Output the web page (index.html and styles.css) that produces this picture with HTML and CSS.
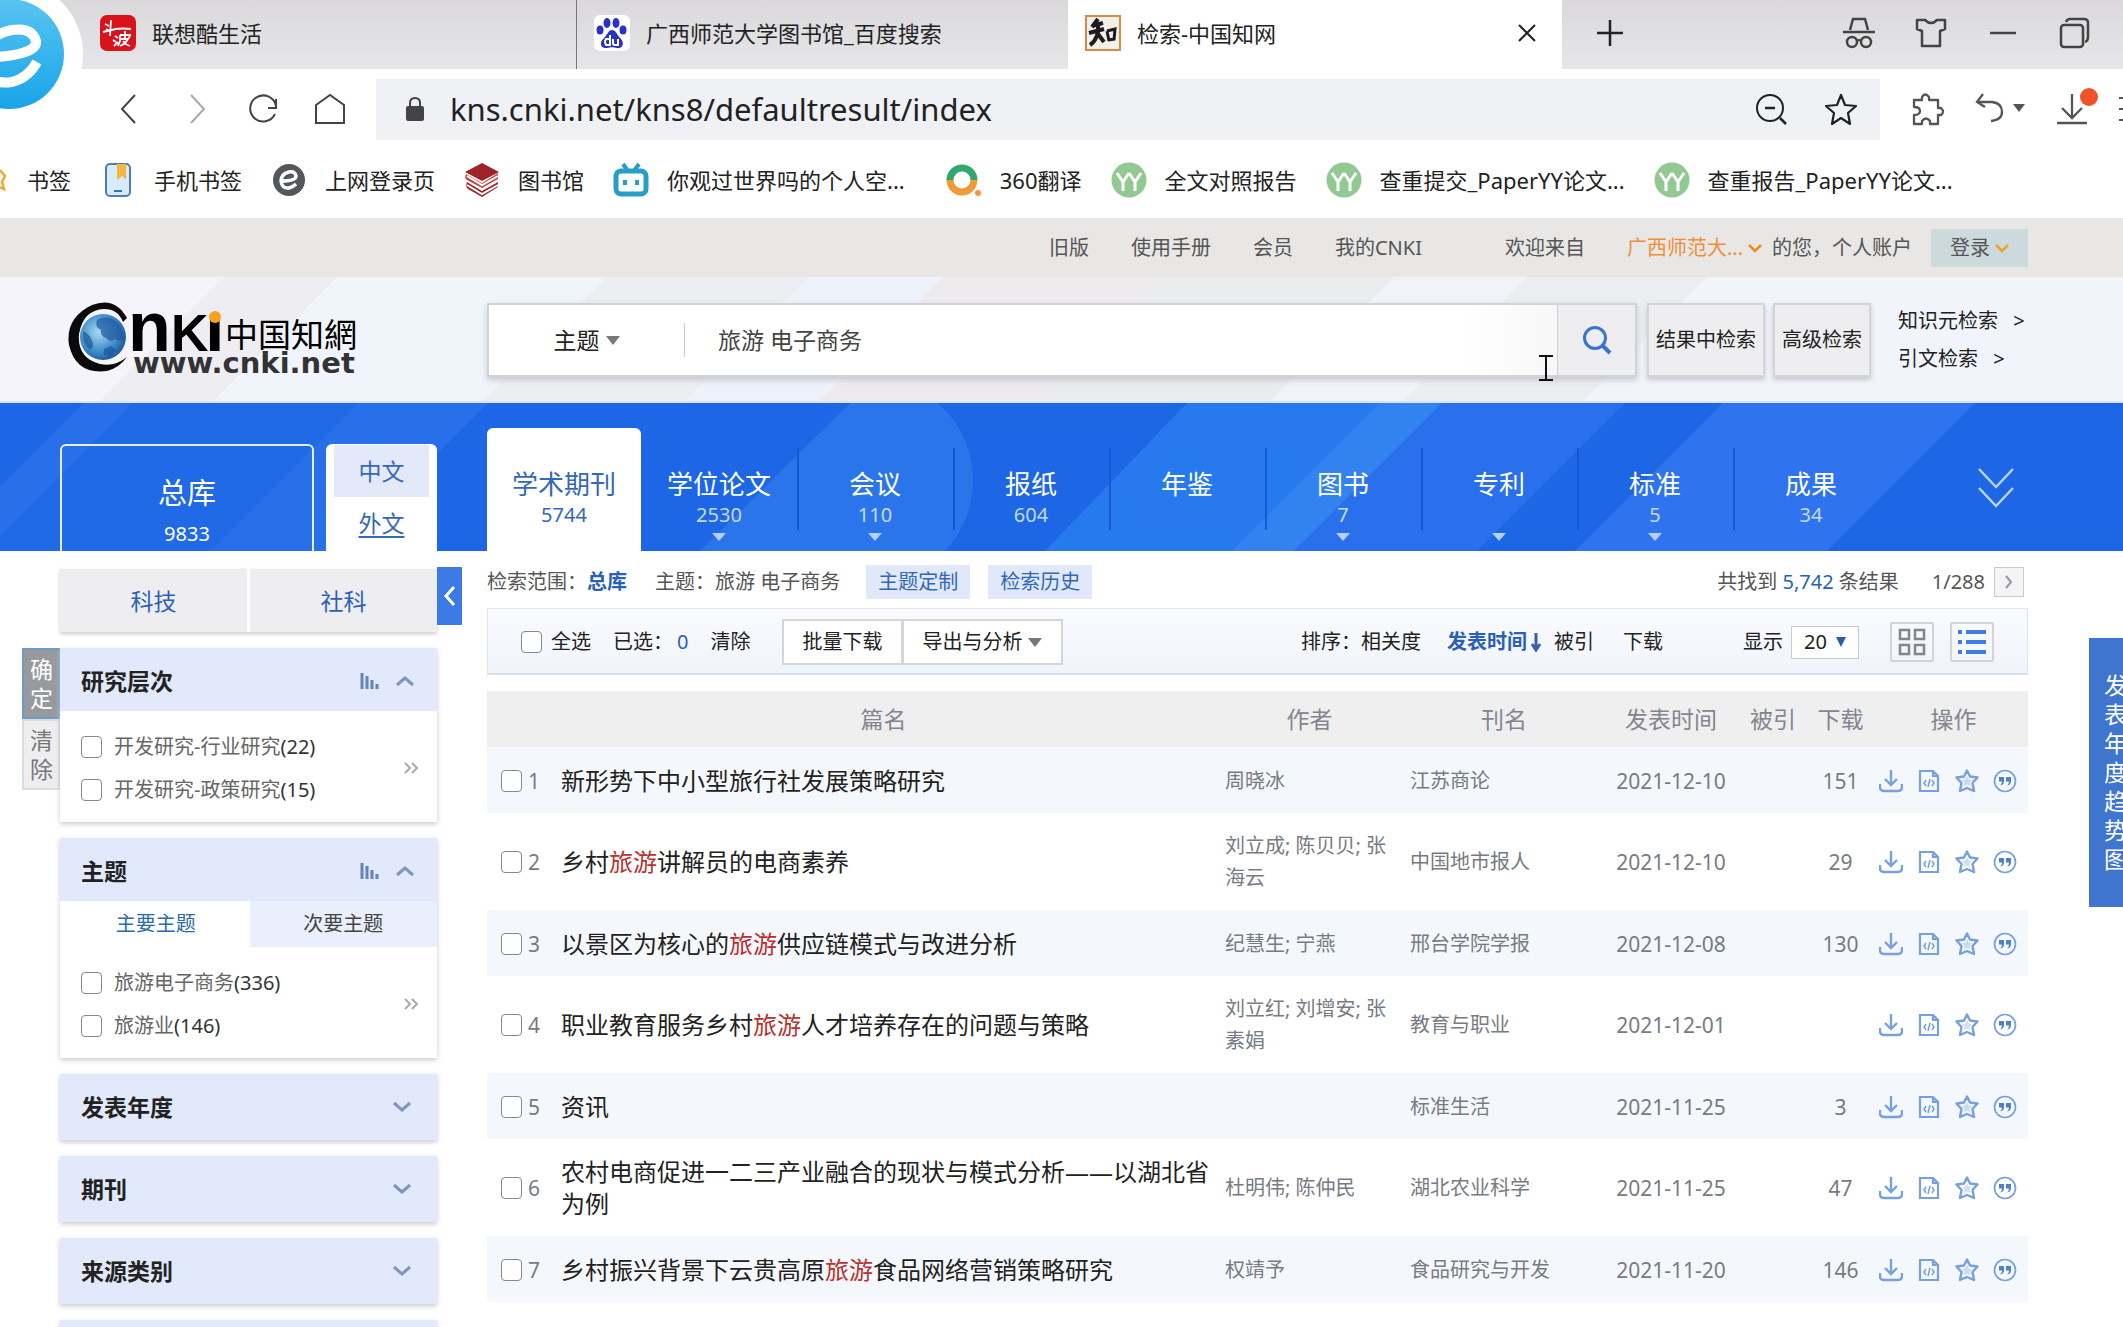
FILE: index.html
```html
<!DOCTYPE html>
<html lang="zh-CN">
<head>
<meta charset="utf-8">
<meta name="viewport" content="width=device-width, initial-scale=1">
<title>检索-中国知网</title>
<link rel="stylesheet" href="styles.css">
</head>
<body>
<svg class="sprite" aria-hidden="true">
  <symbol id="i-down" viewBox="0 0 24 24"><path d="M12 1v15M6 10l6 6 6-6M1 15v3q0 4 4 4h14q4 0 4-4v-3" fill="none" stroke="currentColor" stroke-width="2.400"/></symbol>
  <symbol id="i-doc" viewBox="0 0 24 24"><path d="M3 2h13l5 5v15H3zM16 2v5h5" fill="none" stroke="currentColor" stroke-width="2.200"/><path d="M9 11l-2 3 2 3M15 11l2 3-2 3M13 10l-2 8" fill="none" stroke="currentColor" stroke-width="1.500"/></symbol>
  <symbol id="i-star" viewBox="0 0 24 24"><path d="M12 1.500l3 6 7.500 1-5 5.500 1.500 8-7-3-7 3 1.500-8-5-5.500 7.500-1z" fill="none" stroke="currentColor" stroke-width="2.400" stroke-linejoin="round"/><path d="M12 7l1.700 3.500 3.300.5-2.500 2.500.7 3.500-3.200-1.500-3.200 1.500.7-3.500-2.500-2.500 3.300-.5z" fill="currentColor" opacity=".35"/></symbol>
  <symbol id="i-quote" viewBox="0 0 24 24"><circle cx="12" cy="12" r="10.500" fill="none" stroke="currentColor" stroke-width="1.700"/><path d="M6 8h5v4q0 4-4 4.500 2-1.500 2-4H6zM13 8h5v4q0 4-4 4.500 2-1.500 2-4h-3z" fill="#4f80cc"/></symbol>
  <symbol id="i-yy" viewBox="0 0 36 36"><circle cx="18" cy="18" r="17.500" fill="#92c891"/><path d="M6 11l6 9v9M12 20l6-9M18 11l6 9v9M24 20l6-9" fill="none" stroke="#fff" stroke-width="3"/></symbol>
  <symbol id="i-up" viewBox="0 0 20 12"><path d="M2 10l8-7 8 7" fill="none" stroke="#8095bb" stroke-width="3"/></symbol>
  <symbol id="i-dn" viewBox="0 0 20 12"><path d="M2 2l8 7 8-7" fill="none" stroke="#8095bb" stroke-width="3"/></symbol>
  <symbol id="i-bars" viewBox="0 0 20 16"><path d="M2 0v16M7 3v13M12 7v9M17 11v5" fill="none" stroke="#6383bb" stroke-width="3"/></symbol>
  <symbol id="i-more" viewBox="0 0 16 12"><path d="M2 1l5 5-5 5M9 1l5 5-5 5" fill="none" stroke="#a9a9ae" stroke-width="2"/></symbol>
</svg>

<header class="browser">
  <div class="tabstrip">
    <div class="tab">
      <svg class="i36" viewBox="0 0 36 36"><rect width="36" height="36" rx="7" fill="#d8131c"/><path d="M5 9l4 2M6 14l4 2M11 5l-1 16M3 17l13-3M15 14q8-1 16 0M15 21l3 2M13 25l3 2M14 31l4-4M20 20v6l-2 5M20 20h10l-1 3M25 16v8M21 24h7q-3 5-8 7M23 26q3 4 7 5" stroke="#fff" stroke-width="1.800" fill="none"/></svg>
      <span>联想酷生活</span>
    </div>
    <div class="tab tab-second">
      <svg class="i36" viewBox="0 0 36 36"><rect width="36" height="36" rx="6" fill="#fff"/><g fill="#2932c4"><ellipse cx="13" cy="8" rx="3.500" ry="5"/><ellipse cx="22" cy="8" rx="3.500" ry="5"/><ellipse cx="6" cy="15" rx="3.500" ry="4.500"/><ellipse cx="29" cy="15" rx="3.500" ry="4.500"/><path d="M18 15c4 0 5 5 9 9 4 5 1 10-4 9-4-1-6-1-10 0-6 1-8-5-4-9 4-3 5-9 9-9z"/></g><path d="M16 20v10h-4q-2-3 0-6h4M19 24v4q0 2 2 2h3v-6" fill="none" stroke="#fff" stroke-width="2"/></svg>
      <span>广西师范大学图书馆_百度搜索</span>
    </div>
    <div class="tab tab-active">
      <svg class="i36" viewBox="0 0 36 36"><rect x="1" y="1" width="34" height="34" fill="#f3f0ea" stroke="#d98a4b" stroke-width="2"/><path d="M13 4l-6 8M7 11l11-3M4 18l15-4M13 8v9q-2 9-8 13M13 19l6 8" fill="none" stroke="#1c1c22" stroke-width="4"/><path d="M22 16l2 10M22 16l8-2-1 11M23 25l7-1" fill="none" stroke="#1c1c22" stroke-width="3"/></svg>
      <span>检索-中国知网</span>
      <button class="tab-close" aria-label="关闭"><svg width="20" height="20" viewBox="0 0 20 20"><path d="M2 2l16 16M18 2L2 18" stroke="#222" stroke-width="2"/></svg></button>
    </div>
    <button aria-label="新标签页" class="newtab"><svg width="28" height="28" viewBox="0 0 28 28"><path d="M14 1v26M1 14h26" stroke="#222" stroke-width="2.500"/></svg></button>
    <div class="window-tools">
      <button aria-label="无痕"><svg width="34" height="32" viewBox="0 0 34 32"><path d="M8 13l3-11h12l3 11M1 15h32" fill="none" stroke="#444" stroke-width="2.500"/><circle cx="10" cy="25" r="5" fill="none" stroke="#444" stroke-width="2.500"/><circle cx="24" cy="25" r="5" fill="none" stroke="#444" stroke-width="2.500"/><path d="M15 24q2-2 4 0" fill="none" stroke="#444" stroke-width="2"/></svg></button>
      <button aria-label="皮肤"><svg width="34" height="32" viewBox="0 0 34 32"><path d="M3 3h8q6 6 12 0h8v9l-5 2v15H8V14l-5-2z" fill="none" stroke="#444" stroke-width="2.500" stroke-linejoin="round"/></svg></button>
      <button aria-label="最小化"><svg width="34" height="32" viewBox="0 0 34 32"><path d="M4 16h26" stroke="#444" stroke-width="2.500"/></svg></button>
      <button aria-label="还原"><svg width="34" height="32" viewBox="0 0 34 32"><rect x="3" y="8" width="22" height="22" rx="3" fill="none" stroke="#444" stroke-width="2.500"/><path d="M8 5q1-3 4-3h14q4 0 4 4v14q0 4-3 5" fill="none" stroke="#444" stroke-width="2.500"/></svg></button>
    </div>
  </div>

  <div class="addressrow">
    <div class="navbuttons">
      <button aria-label="后退"><svg width="32" height="32" viewBox="0 0 32 32"><path d="M22 2L9 16l13 14" fill="none" stroke="#444" stroke-width="2"/></svg></button>
      <button aria-label="前进"><svg width="32" height="32" viewBox="0 0 32 32"><path d="M11 2l13 14-13 14" fill="none" stroke="#aaa" stroke-width="2"/></svg></button>
      <button aria-label="刷新"><svg width="32" height="32" viewBox="0 0 32 32"><path d="M28 21A13 13 0 1 1 29 13M29 6v9h-8" fill="none" stroke="#444" stroke-width="2"/></svg></button>
      <button aria-label="主页"><svg width="32" height="32" viewBox="0 0 32 32"><path d="M2 12L16 2l14 10v18H2z" fill="none" stroke="#444" stroke-width="2"/></svg></button>
    </div>
    <div class="addressbar">
      <svg width="18" height="24" viewBox="0 0 18 24"><path d="M4 10V6q0-5 5-5t5 5v4" fill="none" stroke="#444" stroke-width="2"/><rect y="9" width="18" height="15" rx="2" fill="#444"/></svg>
      <input class="url" type="text" aria-label="地址" value="kns.cnki.net/kns8/defaultresult/index">
      <svg width="32" height="32" viewBox="0 0 32 32"><circle cx="15" cy="15" r="13" fill="none" stroke="#222" stroke-width="2"/><path d="M10 15h10M25 25l6 6" stroke="#222" stroke-width="2.500"/></svg>
      <svg width="32" height="32" viewBox="0 0 32 32"><path d="M16 2l4 10 11 1-8 7 2 11-9-6-9 6 2-11-8-7 11-1z" fill="none" stroke="#222" stroke-width="2.200" stroke-linejoin="round"/></svg>
    </div>
    <div class="exttools">
      <svg width="34" height="34" viewBox="0 0 34 34"><path d="M3 8h8V5q3-5 7 0v3h9v8h3q4 4 0 7h-3v9h-8v-3q-4-5-8 0v3H3v-9q6 0 6-4t-6-4z" fill="none" stroke="#555" stroke-width="2.300" stroke-linejoin="round"/></svg>
      <svg width="52" height="34" viewBox="0 0 52 34"><path d="M9 2L3 10l8 5M3 10h15q10 1 10 10 0 8-11 9" fill="none" stroke="#555" stroke-width="2.300"/><path d="M39 12h12l-6 8z" fill="#555"/></svg>
      <svg width="46" height="44" viewBox="0 0 46 44"><path d="M17 7v24M7 21l10 10 10-10M2 36h30" fill="none" stroke="#555" stroke-width="2.300"/><circle cx="34" cy="10" r="9" fill="#ee5427"/></svg>
    </div>
    <svg class="menu-edge" width="4" height="26" viewBox="0 0 4 26"><path d="M0 2h4M0 13h4M0 24h4" stroke="#555" stroke-width="2"/></svg>
  </div>

  <nav class="bookmarks">
    <a href="#" class="bm bm-first"><svg width="6" height="24" viewBox="0 0 6 24"><path d="M0 2l5 6-3 6 2 7-4-2" fill="none" stroke="#f5a72a" stroke-width="2.500"/></svg><span>书签</span></a>
    <a href="#" class="bm"><svg class="i36" viewBox="0 0 36 36"><rect x="6" y="2" width="24" height="32" rx="4" fill="#d6ebfc" stroke="#4a7fb5" stroke-width="2"/><path d="M17 2h9v16l-4-4-5 4z" fill="#f6b53c"/><path d="M14 29h8" stroke="#2f75b8" stroke-width="2"/></svg><span>手机书签</span></a>
    <a href="#" class="bm"><svg class="i36" viewBox="0 0 36 36"><circle cx="18" cy="18" r="16" fill="#53565c"/><path d="M11 19q14 0 14-5-1-5-7-4-8 2-8 9 1 8 8 7 4-1 7-4" fill="none" stroke="#fff" stroke-width="3.500"/></svg><span>上网登录页</span></a>
    <a href="#" class="bm"><svg class="i36" viewBox="0 0 36 36"><path d="M1 10l17-9 17 9-17 9z" fill="#9d2329"/><path d="M2 12q-2 4 1 6l15 8 16-9v-6L18 21z" fill="#bd4a4d"/><path d="M3 20q-2 5 1 7l14 8 16-10v-5l-16 9z" fill="#9d2329"/><path d="M3 14l15 9 16-9M3 23l15 9 16-9" stroke="#fff" stroke-width="2" fill="none"/></svg><span>图书馆</span></a>
    <a href="#" class="bm"><svg class="i36" viewBox="0 0 36 36"><path d="M10 2l5 7M26 2l-5 7" stroke="#279fc4" stroke-width="4"/><rect x="3" y="9" width="30" height="23" rx="5" fill="#fff" stroke="#279fc4" stroke-width="5"/><path d="M12 18v5M24 18v5" stroke="#279fc4" stroke-width="4"/></svg><span>你观过世界吗的个人空...</span></a>
    <a href="#" class="bm bm-wide"><svg class="i36" viewBox="0 0 36 36"><path d="M4 18a12 12 0 0 1 24 0" fill="none" stroke="#2fa86b" stroke-width="7"/><path d="M4 18a12 12 0 0 0 24 0" fill="none" stroke="#f09a3c" stroke-width="7"/><circle cx="32" cy="31" r="3" fill="#f09a3c"/></svg><span>360翻译</span></a>
    <a href="#" class="bm"><svg class="i36"><use href="#i-yy"/></svg><span>全文对照报告</span></a>
    <a href="#" class="bm"><svg class="i36"><use href="#i-yy"/></svg><span>查重提交_PaperYY论文...</span></a>
    <a href="#" class="bm"><svg class="i36"><use href="#i-yy"/></svg><span>查重报告_PaperYY论文...</span></a>
  </nav>

  <svg class="browser-logo" width="86" height="128" viewBox="0 0 86 128" aria-hidden="true">
    <defs><linearGradient id="lg" x1="0" y1="0" x2="0" y2="1"><stop offset="0" stop-color="#58c4f2"/><stop offset="1" stop-color="#18a4e8"/></linearGradient></defs>
    <circle cx="9" cy="54" r="74" fill="#fff"/><circle cx="9" cy="54" r="55" fill="url(#lg)"/>
    <path d="M-20 58Q38 56 36 41 32 27 12 30-14 34-18 62-14 86 12 82 28 78 37 62" fill="none" stroke="#fff" stroke-width="10"/>
  </svg>
</header>

<div class="topbar">
  <a href="#">旧版</a><a href="#">使用手册</a><a href="#">会员</a><a href="#">我的CNKI</a>
  <span class="welcome">欢迎来自</span>
  <a href="#" class="org">广西师范大...<svg width="14" height="10" viewBox="0 0 14 10"><path d="M1 2l6 6 6-6" fill="none" stroke="#f08c1e" stroke-width="2.500"/></svg></a>
  <span class="account">的您，个人账户</span>
  <button class="login">登录<svg width="14" height="10" viewBox="0 0 14 10"><path d="M1 2l6 6 6-6" fill="none" stroke="#f0a030" stroke-width="2.500"/></svg></button>
</div>

<section class="masthead">
  <a href="#" class="logo" aria-label="中国知网">
    <svg width="300" height="84" viewBox="0 0 300 84">
      <defs><radialGradient id="gl" cx=".4" cy=".4" r=".7"><stop offset="0" stop-color="#a9d8ef"/><stop offset=".6" stop-color="#3d8cc9"/><stop offset="1" stop-color="#16488f"/></radialGradient></defs>
      <path d="M60 20Q48-2 25 7-2 20 2 47 9 77 40 73 52 70 60 59 48 69 33 66 10 60 12 36 16 12 37 11 51 11 56 24z" fill="#0a0a0a"/>
      <circle cx="36" cy="39" r="23" fill="url(#gl)"/>
      <path d="M30 22q7-5 16-1 12 8 11 20-4 3-9 0-5 4-9-1-6-2-5-8-7-3-4-10zM16 33q7 3 9 10 3 5-2 9-8-7-7-19zM37 51l7-3 5 4-5 6-7-1z" fill="#1c579f" opacity=".7"/>
      <text class="lg-n" x="61" y="53">n</text><text class="lg-k" x="104" y="53">K</text><text class="lg-n" x="138" y="53">ı</text>
      <circle cx="148" cy="19" r="6" fill="#f5a31c"/>
      <text class="lg-zh" x="158" y="49">中国知網</text>
      <text class="lg-url" x="66" y="75">www.cnki.net</text>
    </svg>
  </a>
  <form class="search">
    <label class="field"><select aria-label="检索字段"><option>主题</option></select><svg width="14" height="9" viewBox="0 0 14 9"><path d="M0 0h14l-7 9z" fill="#777"/></svg></label>
    <input class="query" type="text" aria-label="检索词" value="旅游 电子商务">
    <button class="go" type="button" aria-label="检索"><svg width="30" height="30" viewBox="0 0 30 30"><circle cx="13" cy="13" r="10.500" fill="none" stroke="#3b74cf" stroke-width="3"/><path d="M20 20l8 8" stroke="#3b74cf" stroke-width="4"/></svg></button>
  </form>
  <button class="sq sq-wide">结果中检索</button>
  <button class="sq">高级检索</button>
  <div class="links"><a href="#">知识元检索 <i>&gt;</i></a><a href="#">引文检索 <i>&gt;</i></a></div>
  <svg class="ibeam" width="14" height="26" viewBox="0 0 14 26" aria-hidden="true"><path d="M0 1h14M0 25h14M7 1v24" stroke="#111" stroke-width="2"/></svg>
</section>

<nav class="catalog">
  <svg class="catalog-bg" viewBox="0 0 2123 148" preserveAspectRatio="none" aria-hidden="true">
    <rect width="2123" height="148" fill="#1d66e6"/>
    <path d="M84 0h49L-15 148h-49z" fill="#296fea"/><path d="M133 0h225L210 148H-15z" fill="#2069e7"/>
    <path d="M358 0h130L340 148H210z" fill="#286fea"/>
    <path d="M850 0L700 148H945A103 103 0 0 0 938 0z" fill="#2a75ea"/>
    <path d="M1187 0h255l-148 148h-249z" fill="#267aed"/><path d="M1380 0h62l-148 148h-62z" fill="#3282ef"/>
    <path d="M1442 0h183l-148 148h-183z" fill="#2a6feb"/>
    <path d="M1723 0h252l-148 148h-252z" fill="#2f73ee"/>
  </svg>
  <a href="#" class="all"><b>总库</b><span>9833</span></a>
  <div class="lang"><a href="#" class="on">中文</a><a href="#" class="under">外文</a></div>
  <div class="types">
    <a href="#" class="type active"><b>学术期刊</b><span>5744</span></a>
    <a href="#" class="type more"><b>学位论文</b><span>2530</span></a>
    <a href="#" class="type more"><b>会议</b><span>110</span></a>
    <a href="#" class="type"><b>报纸</b><span>604</span></a>
    <a href="#" class="type"><b>年鉴</b><span></span></a>
    <a href="#" class="type more"><b>图书</b><span>7</span></a>
    <a href="#" class="type more"><b>专利</b><span></span></a>
    <a href="#" class="type more"><b>标准</b><span>5</span></a>
    <a href="#" class="type"><b>成果</b><span>34</span></a>
  </div>
  <button class="expand" aria-label="展开"><svg width="36" height="40" viewBox="0 0 36 40"><path d="M1 1l17 18L35 1M1 20l17 18 17-18" fill="none" stroke="#b9d4fa" stroke-width="2.500"/></svg></button>
</nav>

<div class="page">
  <div class="apply"><button class="ok">确定</button><button class="clear">清除</button></div>
  <aside class="sidebar">
    <div class="disciplines"><button>科技</button><button>社科</button></div>
    <section class="card">
      <h2>研究层次<span class="head-icons"><svg width="20" height="16"><use href="#i-bars"/></svg><svg width="20" height="12"><use href="#i-up"/></svg></span></h2>
      <div class="options">
        <div><label><input type="checkbox">开发研究-行业研究<em>(22)</em></label><label><input type="checkbox">开发研究-政策研究<em>(15)</em></label></div>
        <svg width="16" height="12"><use href="#i-more"/></svg>
      </div>
    </section>
    <section class="card">
      <h2>主题<span class="head-icons"><svg width="20" height="16"><use href="#i-bars"/></svg><svg width="20" height="12"><use href="#i-up"/></svg></span></h2>
      <div class="subtabs"><button class="cur">主要主题</button><button>次要主题</button></div>
      <div class="options">
        <div><label><input type="checkbox">旅游电子商务<em>(336)</em></label><label><input type="checkbox">旅游业<em>(146)</em></label></div>
        <svg width="16" height="12"><use href="#i-more"/></svg>
      </div>
    </section>
    <section class="card closed"><h2>发表年度<svg width="20" height="12"><use href="#i-dn"/></svg></h2></section>
    <section class="card closed"><h2>期刊<svg width="20" height="12"><use href="#i-dn"/></svg></h2></section>
    <section class="card closed"><h2>来源类别<svg width="20" height="12"><use href="#i-dn"/></svg></h2></section>
    <section class="card closed"><h2></h2></section>
  </aside>
  <button class="collapse" aria-label="收起"><svg width="12" height="20" viewBox="0 0 12 20"><path d="M10 1L2 10l8 9" fill="none" stroke="#fff" stroke-width="3"/></svg></button>

  <main class="results">
    <div class="scope">
      <span>检索范围：</span><strong>总库</strong><span class="cond">主题：旅游 电子商务</span>
      <button class="chip">主题定制</button><button class="chip">检索历史</button>
      <span class="found">共找到 <a href="#">5,742</a> 条结果</span><span class="pages">1/288</span>
      <button class="next" aria-label="下一页"><svg width="8" height="14" viewBox="0 0 8 14"><path d="M1 1l5 6-5 6" fill="none" stroke="#999" stroke-width="2"/></svg></button>
    </div>
    <div class="toolbar">
      <label class="all-check"><input type="checkbox">全选</label>
      <span class="picked">已选：<a href="#">0</a></span><a href="#" class="wipe">清除</a>
      <div class="batch"><button>批量下载</button><button>导出与分析<svg width="14" height="9" viewBox="0 0 14 9"><path d="M0 0h14l-7 9z" fill="#777"/></svg></button></div>
      <div class="sort"><span>排序：</span><a href="#">相关度</a><a href="#" class="by">发表时间<svg width="12" height="20" viewBox="0 0 12 20"><path d="M6 1v16M2 12l4 6 4-6" fill="none" stroke="#3a5fae" stroke-width="3"/></svg></a><a href="#" class="cited">被引</a><a href="#" class="dl">下载</a></div>
      <label class="size">显示<span><select><option>20</option></select><svg width="10" height="10" viewBox="0 0 10 10"><path d="M0 0h10l-5 10z" fill="#2a5cab"/></svg></span></label>
      <button class="view" aria-label="缩略"><svg width="28" height="28" viewBox="0 0 28 28"><path d="M2 2h9v9H2zM17 2h9v9h-9zM2 17h9v9H2zM17 17h9v9h-9z" fill="none" stroke="#85858c" stroke-width="2.500"/></svg></button>
      <button class="view" aria-label="列表"><svg width="28" height="28" viewBox="0 0 28 28"><path d="M8 4h20M8 14h20M8 24h20M0 4h4M0 14h4M0 24h4" stroke="#3f7ee0" stroke-width="4"/></svg></button>
    </div>
    <table>
      <colgroup><col class="c-sel"><col><col class="c-author"><col class="c-journal"><col class="c-date"><col class="c-cited"><col class="c-down"><col class="c-ops"></colgroup>
      <thead><tr><th></th><th>篇名</th><th>作者</th><th>刊名</th><th>发表时间</th><th>被引</th><th>下载</th><th>操作</th></tr></thead>
      <tbody>
        <tr><td class="sel"><label><input type="checkbox">1</label></td><td class="title"><a href="#">新形势下中小型旅行社发展策略研究</a></td><td class="author">周晓冰</td><td>江苏商论</td><td class="date">2021-12-10</td><td></td><td class="num">151</td><td class="ops"><div><svg><use href="#i-down"/></svg><svg><use href="#i-doc"/></svg><svg><use href="#i-star"/></svg><svg><use href="#i-quote"/></svg></div></td></tr>
        <tr><td class="sel"><label><input type="checkbox">2</label></td><td class="title"><a href="#">乡村<mark>旅游</mark>讲解员的电商素养</a></td><td class="author">刘立成; 陈贝贝; 张海云</td><td>中国地市报人</td><td class="date">2021-12-10</td><td></td><td class="num">29</td><td class="ops"><div><svg><use href="#i-down"/></svg><svg><use href="#i-doc"/></svg><svg><use href="#i-star"/></svg><svg><use href="#i-quote"/></svg></div></td></tr>
        <tr><td class="sel"><label><input type="checkbox">3</label></td><td class="title"><a href="#">以景区为核心的<mark>旅游</mark>供应链模式与改进分析</a></td><td class="author">纪慧生; 宁燕</td><td>邢台学院学报</td><td class="date">2021-12-08</td><td></td><td class="num">130</td><td class="ops"><div><svg><use href="#i-down"/></svg><svg><use href="#i-doc"/></svg><svg><use href="#i-star"/></svg><svg><use href="#i-quote"/></svg></div></td></tr>
        <tr><td class="sel"><label><input type="checkbox">4</label></td><td class="title"><a href="#">职业教育服务乡村<mark>旅游</mark>人才培养存在的问题与策略</a></td><td class="author">刘立红; 刘增安; 张素娟</td><td>教育与职业</td><td class="date">2021-12-01</td><td></td><td class="num"></td><td class="ops"><div><svg><use href="#i-down"/></svg><svg><use href="#i-doc"/></svg><svg><use href="#i-star"/></svg><svg><use href="#i-quote"/></svg></div></td></tr>
        <tr><td class="sel"><label><input type="checkbox">5</label></td><td class="title"><a href="#">资讯</a></td><td class="author"></td><td>标准生活</td><td class="date">2021-11-25</td><td></td><td class="num">3</td><td class="ops"><div><svg><use href="#i-down"/></svg><svg><use href="#i-doc"/></svg><svg><use href="#i-star"/></svg><svg><use href="#i-quote"/></svg></div></td></tr>
        <tr><td class="sel"><label><input type="checkbox">6</label></td><td class="title"><a href="#">农村电商促进一二三产业融合的现状与模式分析——以湖北省为例</a></td><td class="author">杜明伟; 陈仲民</td><td>湖北农业科学</td><td class="date">2021-11-25</td><td></td><td class="num">47</td><td class="ops"><div><svg><use href="#i-down"/></svg><svg><use href="#i-doc"/></svg><svg><use href="#i-star"/></svg><svg><use href="#i-quote"/></svg></div></td></tr>
        <tr><td class="sel"><label><input type="checkbox">7</label></td><td class="title"><a href="#">乡村振兴背景下云贵高原<mark>旅游</mark>食品网络营销策略研究</a></td><td class="author">权靖予</td><td>食品研究与开发</td><td class="date">2021-11-20</td><td></td><td class="num">146</td><td class="ops"><div><svg><use href="#i-down"/></svg><svg><use href="#i-doc"/></svg><svg><use href="#i-star"/></svg><svg><use href="#i-quote"/></svg></div></td></tr>
      </tbody>
    </table>
  </main>
</div>
<a href="#" class="trend">发表年度趋势图</a>
</body>
</html>
```
FILE: styles.css
```css
* { box-sizing: border-box; }
html, body { margin: 0; height: 100%; }
body {
  position: relative;
  overflow: hidden;
  background: #fff;
  color: #222;
  font: 20px/32px "Noto Sans", "Noto Sans CJK SC", sans-serif;
}
a { color: inherit; text-decoration: none; }
button, input, select { font: inherit; color: inherit; margin: 0; }
button { padding: 0; border: 0; background: none; white-space: nowrap; }
svg { flex: none; display: block; }
.sprite { position: absolute; width: 0; height: 0; }
input[type="checkbox"] {
  appearance: none;
  flex: none;
  width: 21px;
  height: 22px;
  border: 1px solid #888;
  border-radius: 4px;
  background: #fff;
}
.i36 { width: 36px; height: 36px; }

/* browser frame */
.browser { position: relative; font-size: 22px; }
.browser-logo { position: absolute; left: 0; top: 0; }
.tabstrip {
  display: flex;
  align-items: center;
  height: 69px;
  padding-left: 83px;
  background: linear-gradient(#dad8db, #e6e6e8);
}
.tab {
  display: flex;
  align-items: center;
  gap: 16px;
  width: 493px;
  height: 69px;
  padding: 0 25px 4px 17px;
}
.tab-second { border-left: 1px solid #777; width: 492px; }
.tab-active { background: #fff; width: 494px; }
.tab-close { margin-left: auto; }
.newtab { margin: 0 0 4px 34px; }
.window-tools { display: flex; gap: 38px; margin: 0 31px 4px auto; }
.addressrow { display: flex; align-items: center; height: 80px; }
.navbuttons { display: flex; gap: 35px; padding-left: 113px; width: 376px; }
.addressbar {
  flex: 1;
  display: flex;
  align-items: center;
  gap: 38px;
  height: 61px;
  padding: 0 23px 0 30px;
  background: #eff1f5;
}
.url {
  flex: 1;
  min-width: 0;
  margin-left: -12px;
  padding: 0;
  border: 0;
  background: none;
  font-size: 31px;
  line-height: 44px;
}
.exttools { display: flex; align-items: center; gap: 29px; padding: 0 18px 0 31px; }
.bookmarks {
  display: flex;
  align-items: center;
  gap: 29px;
  height: 69px;
  padding-bottom: 8px;
  white-space: nowrap;
}
.bm { display: flex; align-items: center; gap: 18px; }
.bm-first { gap: 21px; }
.bm-wide { margin-left: 12px; }

/* site */
.topbar {
  display: flex;
  align-items: center;
  justify-content: flex-end;
  gap: 42px;
  height: 59px;
  padding-right: 95px;
  background: #e8e7e5;
  color: #555;
}
.welcome { margin-left: 41px; }
.org { display: flex; align-items: center; gap: 5px; color: #ef8f35; }
.account { margin-left: -32px; }
.login {
  display: flex;
  align-items: center;
  justify-content: center;
  gap: 5px;
  width: 97px;
  height: 38px;
  margin-left: -23px;
  background: #cddadd;
}
.masthead {
  position: relative;
  display: flex;
  align-items: center;
  height: 126px;
  padding: 2px 95px 0 67px;
  background: linear-gradient(135deg, #f4f4fa 0 10%, #ededf2 10% 15%, #f0f4fb 15% 27%, #edeef2 27% 36%, #eef2fa 36% 42%, #eeebef 42% 52%, #ebecee 52% 62%, #f1f3f9 62% 68%, #ebedf0 68% 76%, #f1f4fb 76%);
  border-bottom: 2px solid #d6e6f5;
}
.logo { width: 420px; }
.lg-n { font: bold 70px "Liberation Sans", sans-serif; }
.lg-k { font: bold 52px "Liberation Sans", sans-serif; }
.lg-zh { font: 33px "Noto Sans CJK SC", sans-serif; }
.lg-url { font: bold 29px "DejaVu Sans", sans-serif; fill: #333; }
.search {
  flex: 1;
  display: flex;
  height: 74px;
  border: 2px solid #d0d3d8;
  background: linear-gradient(90deg, #fff 85%, #f3f1f3);
  box-shadow: 0 3px 6px #c8c8cc;
  font-size: 23px;
}
.field {
  display: flex;
  align-items: center;
  justify-content: center;
  gap: 6px;
  width: 196px;
  border-right: 1px solid #ccc;
  margin: 18px 0;
}
.field select, .size select { appearance: none; border: 0; background: none; padding: 0; }
.query { flex: 1; min-width: 0; border: 0; padding: 0 33px; background: none; color: #444; }
.go {
  display: grid;
  place-items: center;
  width: 78px;
  border-left: 1px solid #ccc;
  background: #eeeef0;
}
.sq {
  width: 98px;
  height: 74px;
  margin-left: 8px;
  border: 2px solid #d3d5d9;
  background: #eeeef0;
  box-shadow: 0 3px 5px #c8c8cc;
}
.sq-wide { width: 118px; margin-left: 10px; }
.links { display: flex; flex-direction: column; gap: 6px; width: 130px; margin-left: 27px; }
.links i { font-style: normal; margin-left: 10px; }
.ibeam { position: absolute; right: 570px; top: 78px; }
.catalog {
  position: relative;
  display: flex;
  align-items: flex-end;
  height: 148px;
  padding: 0 109px 0 60px;
  color: #fff;
}
.catalog-bg { position: absolute; inset: 0; width: 100%; height: 100%; }
.catalog > a, .catalog > div, .catalog > button { position: relative; }
.catalog b { font-weight: normal; }
.all {
  display: flex;
  flex-direction: column;
  align-items: center;
  gap: 7px;
  width: 254px;
  height: 107px;
  padding-top: 29px;
  border: 2px solid #e4eefc;
  border-bottom: 0;
  border-radius: 6px 6px 0 0;
}
.all b { font-size: 29px; line-height: 36px; }
.lang {
  display: flex;
  flex-direction: column;
  width: 111px;
  height: 107px;
  margin: 0 50px 0 12px;
  padding: 1px 8px;
  border-radius: 6px 6px 0 0;
  background: #fff;
  color: #3568b8;
  font-size: 23px;
  text-align: center;
}
.lang a { line-height: 52px; }
.lang .on { background: #e3e9f8; }
.under { text-decoration: underline; text-underline-offset: 4px; text-decoration-thickness: 2px; }
.types { display: flex; flex: 1; }
.type {
  position: relative;
  display: flex;
  flex-direction: column;
  align-items: center;
  flex: 0 1 156px;
  height: 123px;
  padding-top: 38px;
}
.type b { font-size: 26px; line-height: 36px; }
.type span { line-height: 26px; color: #c3daf9; }
.type + .type + .type::before {
  content: "";
  position: absolute;
  left: 0;
  top: 20px;
  height: 82px;
  border-left: 2px solid #1557d4;
}
.type.more::after {
  content: "";
  margin-top: 5px;
  border: 7px solid transparent;
  border-top: 8px solid #b4d0f8;
  border-bottom: 0;
}
.type span:empty { height: 26px; }
.type.active { flex-basis: 154px; background: #fff; border-radius: 6px 6px 0 0; color: #3568b8; }
.active span { color: #3568b8; }
.expand { align-self: center; padding-top: 22px; }

.page { display: flex; align-items: flex-start; padding: 16px 95px 0 22px; }
.apply { width: 38px; padding-top: 81px; }
.apply button {
  display: block;
  width: 38px;
  height: 71px;
  padding: 0 6px;
  border: 2px solid #dcdcdf;
  background: #eeedef;
  color: #777;
  font-size: 23px;
  line-height: 29px;
  white-space: normal;
}
.apply .ok { border-color: #6a9cc8; background: #97999c; color: #fff; }
.sidebar { display: flex; flex-direction: column; gap: 16px; width: 377px; padding-top: 2px; }
.disciplines { display: flex; gap: 3px; box-shadow: 0 2px 4px #ccc; background: #fff; }
.disciplines button { flex: 1; height: 63px; background: #eeedef; color: #2e5fb8; font-size: 23px; }
.card { box-shadow: 0 2px 5px #c9c9cf; background: #fff; }
.card h2 {
  display: flex;
  align-items: center;
  justify-content: space-between;
  height: 63px;
  margin: 0;
  padding: 2px 22px 0 21px;
  background: #e2e9fb;
  font-size: 23px;
}
.card.closed h2 { height: 66px; padding: 0 25px 0 21px; }
.head-icons { display: flex; align-items: center; gap: 15px; }
.options {
  display: flex;
  align-items: center;
  justify-content: space-between;
  padding: 14px 18px 11px 21px;
  color: #666;
}
.options label { display: flex; align-items: center; height: 43px; }
.options input { margin-right: 12px; }
.options em { font-style: normal; color: #333; }
.subtabs { display: flex; padding-left: 2px; }
.subtabs button { flex: 1; height: 46px; background: #e9effc; color: #444; }
.subtabs .cur { background: #fff; color: #2a6ba8; }
.collapse { display: grid; place-items: center; width: 25px; height: 58px; background: #3c7be6; }

.results { flex: 1; min-width: 0; margin-left: 25px; }
.scope { display: flex; align-items: center; height: 30px; color: #555; white-space: nowrap; }
.scope strong, .by { color: #2a5fbb; font-weight: bold; }
.cond { margin-left: 28px; }
.chip { width: 104px; height: 34px; margin-left: 18px; background: #e0e8fa; color: #2f68b4; }
.cond + .chip { margin-left: 26px; }
.found { margin-left: auto; }
.found a, .picked a { color: #2464b8; }
.pages { margin: 0 9px 0 33px; }
.next { display: grid; place-items: center; width: 30px; height: 30px; margin-right: 4px; border: 1px solid #c9c9ce; background: #f4f3f5; }
.toolbar {
  display: flex;
  align-items: center;
  height: 67px;
  margin: 11px 0 16px;
  padding: 2px 33px 0;
  border: 1px solid #dfe4ee;
  border-bottom: 2px solid #d5dfec;
  background: linear-gradient(#fafbfe, #f0f4fb);
  white-space: nowrap;
}
.all-check { display: flex; align-items: center; gap: 9px; }
.picked { margin-left: 22px; }
.picked a { margin-left: 4px; }
.wipe { margin: 0 32px 0 22px; }
.batch { display: flex; }
.batch button {
  display: flex;
  align-items: center;
  gap: 6px;
  height: 46px;
  padding: 0 19px 0 18px;
  border: 2px solid #d5d5d9;
  background: #fff;
}
.batch button + button { margin-left: -1px; }
.sort { display: flex; margin-left: auto; }
.by { display: flex; align-items: center; gap: 3px; margin-left: 26px; }
.cited { margin-left: 12px; }
.dl { margin-left: 29px; }
.size { display: flex; align-items: center; gap: 8px; margin: 0 15px 0 80px; }
.size span { display: flex; align-items: center; gap: 9px; height: 33px; width: 68px; padding-left: 12px; border: 1px solid #c9ccd2; background: #fff; }
.view { display: grid; place-items: center; width: 44px; height: 40px; margin-left: 16px; border: 2px solid #d3d4d8; border-radius: 2px; }

table { width: 100%; table-layout: fixed; border-collapse: collapse; color: #777b84; }
.c-sel { width: 71px; }
.c-author { width: 201px; }
.c-journal { width: 188px; }
.c-date { width: 146px; }
.c-cited { width: 58px; }
.c-down { width: 77px; }
.c-ops { width: 149px; }
th { height: 56px; padding: 0; background: #efeff0; font-size: 23px; font-weight: normal; color: #84868f; }
td { height: 66px; padding: 17px 0 16px; }
tbody tr:nth-child(odd) { background: #f4f7fb; }
.sel label { display: flex; align-items: center; gap: 6px; padding-left: 14px; font-size: 21px; }
td.title { padding-left: 3px; font-size: 24px; color: #222; }
.title mark { background: none; color: #b8312f; }
td.author { padding-left: 16px; padding-right: 16px; }
.date { font-size: 21px; text-align: center; }
.num { font-size: 21px; text-align: center; }
.ops div { display: flex; gap: 14px; color: #76a0de; }
.ops svg { width: 24px; height: 24px; }
.trend {
  position: absolute;
  right: -20px;
  top: 638px;
  width: 54px;
  height: 269px;
  padding: 33px 15px;
  background: #3f74cf;
  color: #fff;
  font-size: 23px;
  line-height: 29px;
}
```
